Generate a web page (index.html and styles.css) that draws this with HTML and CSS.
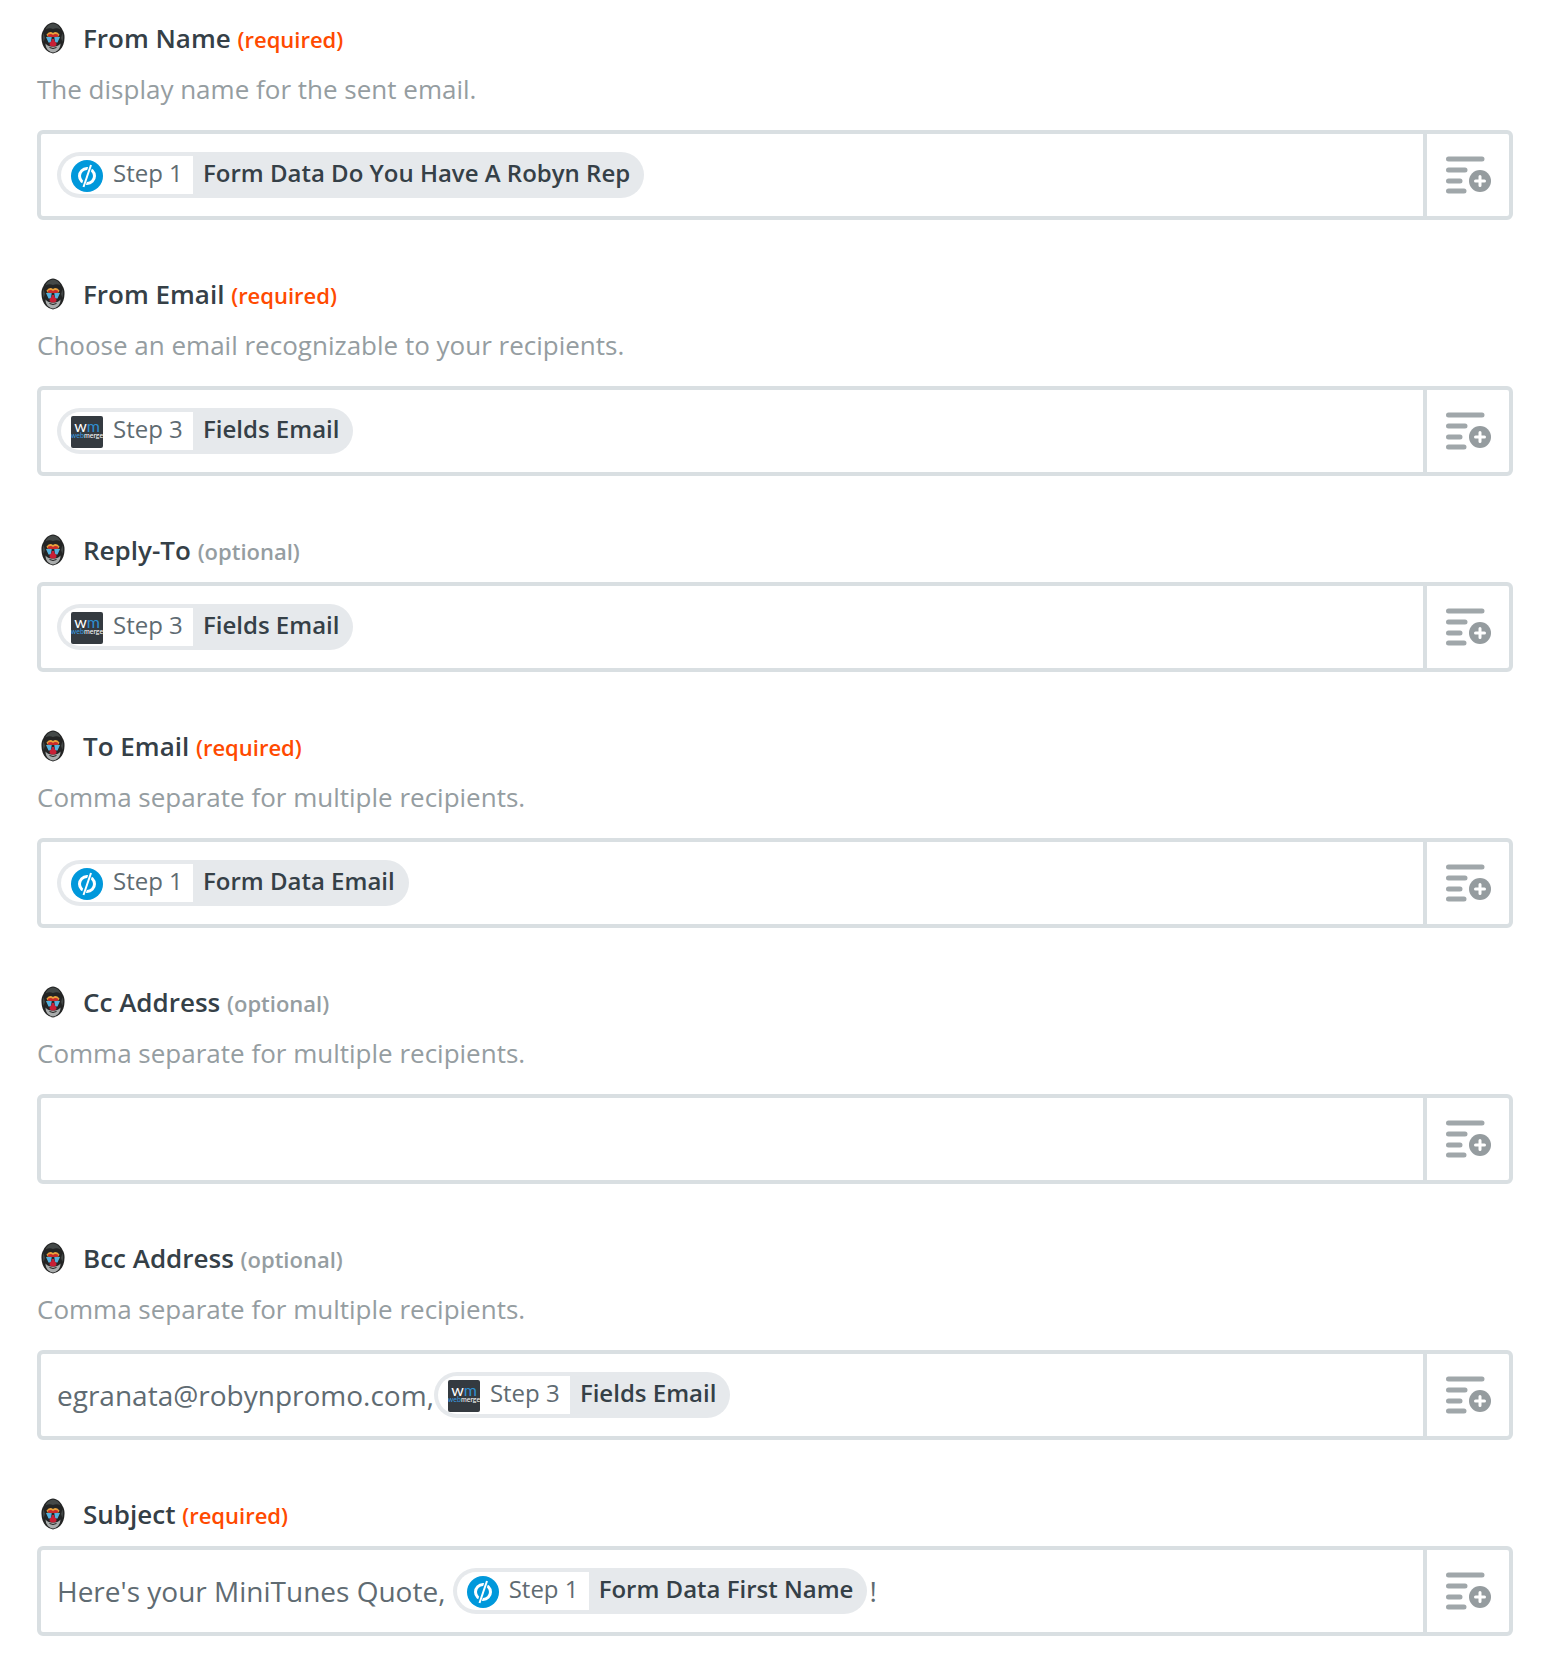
FILE: index.html
```html
<!DOCTYPE html>
<html lang="en">
<head>
    <meta charset="utf-8">
    <meta name="viewport" content="width=device-width, initial-scale=1">
    <title>Edit Template</title>
    <link rel="stylesheet" href="styles.css">
</head>
<body>
    <!-- shared icons -->
    <svg class="sprite" aria-hidden="true">
        <symbol id="mandrill" viewBox="0 0 24 32">
            <path fill="#232424" d="M12 .5C16 .8 20 4 21.500 8C23 10 23.700 13 23.500 16C23.500 20 22 25 19 28Q16 31 12 31.500Q8 31 5 28C2 25 .5 20 .5 16C.3 13 1 10 2.500 8C4 4 8 .8 12 .5Z"/>
            <path fill="#444948" d="M12 1.500C8 2 5.500 4.500 4.500 7.500Q8 5.500 12 7Q16 5.500 19.500 7.500C18.500 4.500 16 2 12 1.500ZM2.500 11Q1 15 2.500 20L4 16ZM21.500 11Q23 15 21.500 20L20 16Z"/>
            <path fill="#a9acac" d="M4.500 21.500Q7 25 12 24.500Q17 25 19.500 21.500Q19.500 26 16.500 28.500Q14 30.500 12 30.500Q10 30.500 7.500 28.500Q4.500 26 4.500 21.500Z"/>
            <path fill="#e8a13c" d="M5.500 12.500Q9 8.500 12 11Q15 8.500 18.500 12.500L17.500 14.500H6.500Z"/>
            <path fill="#c9292b" d="M6.500 13Q10 11 12 13Q14 11 17.500 13L16 15H8Z"/>
            <path fill="#55b2df" d="M5 15H10.700L10 20.500L7.500 20.500ZM19 15H13.300L14 20.500L16.500 20.500Z"/>
            <path fill="#c91f36" d="M11 17H13L13.500 19Q16 20.500 15.500 23Q14 25 12 24.200Q10 25 8.500 23Q8 20.500 10.500 19Z"/>
            <path fill="none" stroke="#222" stroke-width="1" d="M8.500 25.500Q12 27.500 15.500 25.500"/>
        </symbol>
        <symbol id="unbounce" viewBox="0 0 32 32">
            <circle cx="16" cy="16" r="16" fill="#0098db"/>
            <g fill="none" stroke="#fff">
                <ellipse cx="16" cy="16" rx="7.500" ry="7.500" stroke-width="3"/>
                <path stroke="#0098db" stroke-width="4" d="M20.500 4L11.500 28"/>
                <path stroke-width="2" d="M20 5L12.500 27"/>
            </g>
        </symbol>
        <symbol id="webmerge" viewBox="0 0 32 32">
            <rect width="32" height="32" rx="2" fill="#343a40"/>
            <text class="wm-mark" x="16" y="16" text-anchor="middle"><tspan fill="#fff">w</tspan><tspan fill="#2f8fd0">m</tspan></text>
            <text class="wm-name" x="16" y="22" text-anchor="middle"><tspan fill="#3a9de0">web</tspan><tspan fill="#fff">merge</tspan></text>
        </symbol>
        <symbol id="insert" viewBox="-1 0 46 38">
            <path stroke="#a0a7aa" stroke-width="5" stroke-linecap="round" d="M2.500 3H36M2.500 14H19M2.500 25H14M2.500 35H18"/>
            <circle cx="34" cy="25" r="11" fill="#959c9f"/>
            <path stroke="#fff" stroke-width="3" stroke-linecap="round" d="M29.500 25H38.500M34 20.500V29.500"/>
        </symbol>
    </svg>

    <form class="fields">
        <div class="field">
            <label class="field-label" for="fromName"><svg class="app-icon"><use href="#mandrill"/></svg><span>From Name <em class="required">(required)</em></span></label>
            <p class="help">The display name for the sent email.</p>
            <div class="box">
                <div class="tokens">
                    <span class="pill"><span class="step"><svg class="step-icon"><use href="#unbounce"/></svg>Step 1</span><b>Form Data Do You Have A Robyn Rep</b></span>
                    <input class="rest" type="text" id="fromName">
                </div>
                <button class="insert" type="button" aria-label="Insert a field"><svg><use href="#insert"/></svg></button>
            </div>
        </div>

        <div class="field">
            <label class="field-label" for="fromEmail"><svg class="app-icon"><use href="#mandrill"/></svg><span>From Email <em class="required">(required)</em></span></label>
            <p class="help">Choose an email recognizable to your recipients.</p>
            <div class="box">
                <div class="tokens">
                    <span class="pill"><span class="step"><svg class="step-icon"><use href="#webmerge"/></svg>Step 3</span><b>Fields Email</b></span>
                    <input class="rest" type="text" id="fromEmail">
                </div>
                <button class="insert" type="button" aria-label="Insert a field"><svg><use href="#insert"/></svg></button>
            </div>
        </div>

        <div class="field">
            <label class="field-label" for="replyTo"><svg class="app-icon"><use href="#mandrill"/></svg><span>Reply-To <em class="optional">(optional)</em></span></label>
            <div class="box">
                <div class="tokens">
                    <span class="pill"><span class="step"><svg class="step-icon"><use href="#webmerge"/></svg>Step 3</span><b>Fields Email</b></span>
                    <input class="rest" type="text" id="replyTo">
                </div>
                <button class="insert" type="button" aria-label="Insert a field"><svg><use href="#insert"/></svg></button>
            </div>
        </div>

        <div class="field">
            <label class="field-label" for="toEmail"><svg class="app-icon"><use href="#mandrill"/></svg><span>To Email <em class="required">(required)</em></span></label>
            <p class="help">Comma separate for multiple recipients.</p>
            <div class="box">
                <div class="tokens">
                    <span class="pill"><span class="step"><svg class="step-icon"><use href="#unbounce"/></svg>Step 1</span><b>Form Data Email</b></span>
                    <input class="rest" type="text" id="toEmail">
                </div>
                <button class="insert" type="button" aria-label="Insert a field"><svg><use href="#insert"/></svg></button>
            </div>
        </div>

        <div class="field">
            <label class="field-label" for="cc"><svg class="app-icon"><use href="#mandrill"/></svg><span>Cc Address <em class="optional">(optional)</em></span></label>
            <p class="help">Comma separate for multiple recipients.</p>
            <div class="box">
                <div class="tokens">
                    <input class="rest" type="text" id="cc">
                </div>
                <button class="insert" type="button" aria-label="Insert a field"><svg><use href="#insert"/></svg></button>
            </div>
        </div>

        <div class="field">
            <label class="field-label" for="bcc"><svg class="app-icon"><use href="#mandrill"/></svg><span>Bcc Address <em class="optional">(optional)</em></span></label>
            <p class="help">Comma separate for multiple recipients.</p>
            <div class="box">
                <div class="tokens">
                    <input class="lead" type="text" id="bcc" value="egranata@robynpromo.com,">
                    <span class="pill"><span class="step"><svg class="step-icon"><use href="#webmerge"/></svg>Step 3</span><b>Fields Email</b></span>
                    <input class="rest" type="text" aria-label="Bcc Address, continued">
                </div>
                <button class="insert" type="button" aria-label="Insert a field"><svg><use href="#insert"/></svg></button>
            </div>
        </div>

        <div class="field">
            <label class="field-label" for="subject"><svg class="app-icon"><use href="#mandrill"/></svg><span>Subject <em class="required">(required)</em></span></label>
            <div class="box">
                <div class="tokens">
                    <input class="lead" type="text" id="subject" value="Here's your MiniTunes Quote, ">
                    <span class="pill"><span class="step"><svg class="step-icon"><use href="#unbounce"/></svg>Step 1</span><b>Form Data First Name</b></span>
                    <input class="rest" type="text" aria-label="Subject, continued" value="!">
                </div>
                <button class="insert" type="button" aria-label="Insert a field"><svg><use href="#insert"/></svg></button>
            </div>
        </div>
    </form>
</body>
</html>
```

FILE: styles.css
```css
* {
    box-sizing: border-box;
    margin: 0;
    padding: 0;
}

body {
    background: #fff;
    font-family: "Open Sans", "Noto Sans", sans-serif;
    color: #354047;
}

.sprite {
    display: none;
}

.fields {
    display: flex;
    flex-direction: column;
    gap: 55px;
    padding: 19px 39px 34px 37px;
}

.field-label {
    display: flex;
    align-items: center;
    gap: 18px;
    padding-left: 4px;
    margin-bottom: 13px;
    font-size: 26px;
    line-height: 38px;
    font-weight: 600;
}

.field-label em {
    font-size: 22px;
    line-height: 22px;
    font-style: normal;
}

.required {
    color: #ff4a00;
}

.optional {
    color: #959da1;
}

.app-icon {
    width: 24px;
    height: 32px;
}

.help {
    margin: 14px 0 23px;
    font-size: 26px;
    line-height: 36px;
    color: #959da1;
}

.box {
    display: flex;
    height: 90px;
    border: 4px solid #d9dfe2;
    border-radius: 6px;
}

.tokens {
    display: flex;
    flex: 1;
    align-items: center;
    min-width: 0;
    padding: 0 16px;
}

.tokens input {
    min-width: 0;
    height: 46px;
    border: none;
    outline: none;
    background: none;
    font-family: inherit;
    font-size: 28px;
    color: #5f6b72;
}

.tokens .lead {
    flex: none;
    field-sizing: content;
}

.tokens .rest {
    flex: 1;
    padding-left: 2px;
}

.pill {
    display: flex;
    flex: none;
    height: 46px;
    padding: 4px 14px 4px 4px;
    border-radius: 23px;
    background: #e6e9ec;
    font-size: 24px;
    line-height: 34px;
}

.pill b {
    padding-left: 10px;
    font-weight: 600;
}

.step {
    display: flex;
    gap: 10px;
    width: 132px;
    padding-left: 10px;
    border-radius: 19px 0 0 19px;
    background: #fff;
    color: #5f6b72;
}

.step-icon {
    width: 32px;
    height: 32px;
    margin-top: 4px;
}

.wm-mark {
    font: 16px Lato, sans-serif;
}

.wm-name {
    font: 7px Lato, sans-serif;
}

.insert {
    display: flex;
    align-items: center;
    justify-content: center;
    width: 86px;
    border: none;
    border-left: 4px solid #d9dfe2;
    background: none;
    cursor: pointer;
}

.insert svg {
    width: 46px;
    height: 38px;
}
```
